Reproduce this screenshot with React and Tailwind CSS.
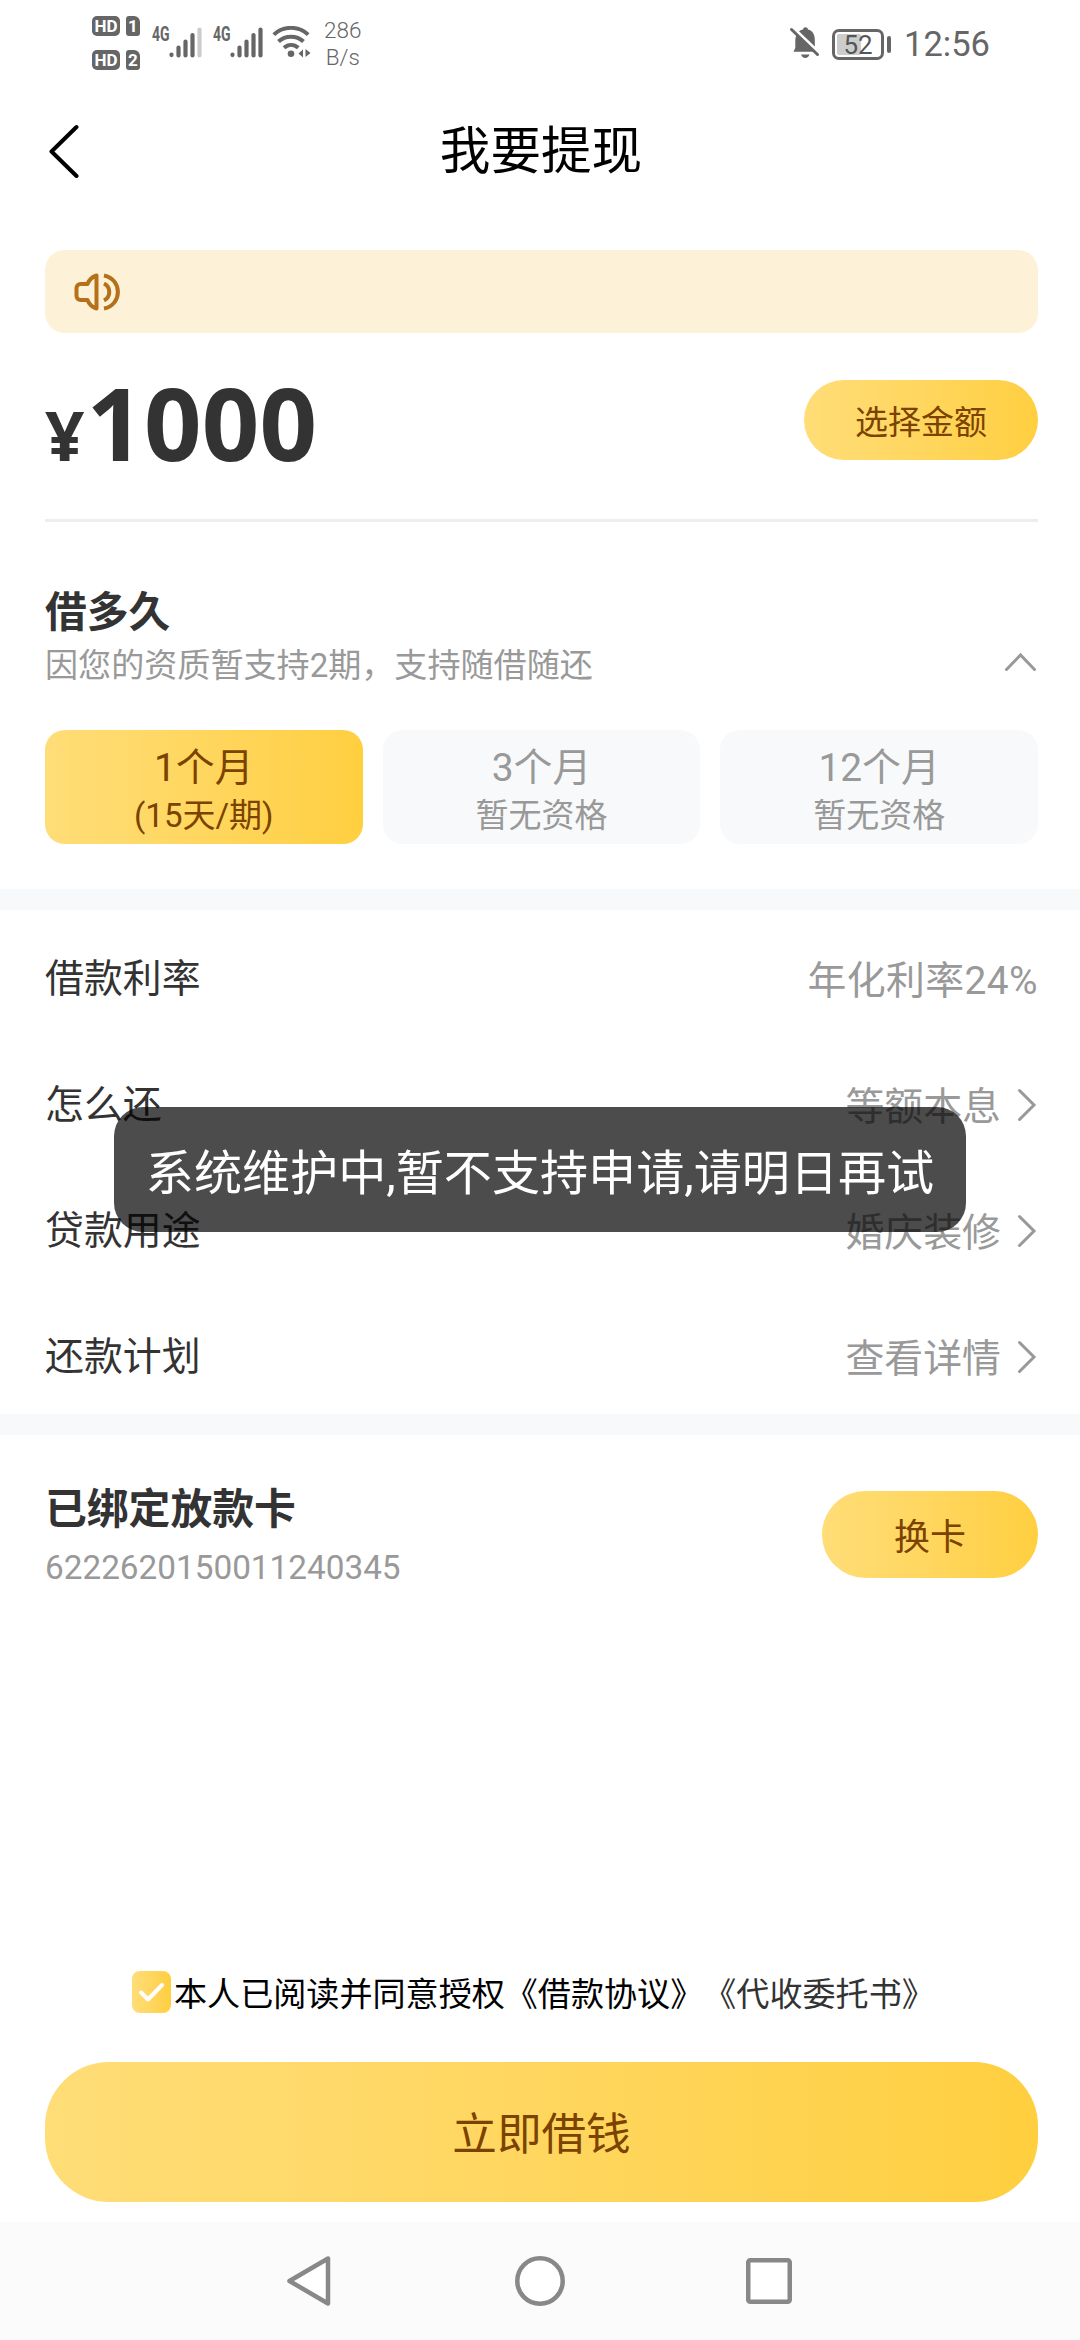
import React, { useState } from 'react';

const rows = [
    { label: '借款利率', value: '年化利率24%', link: false },
    { label: '怎么还', value: '等额本息', link: true },
    { label: '贷款用途', value: '婚庆装修', link: true },
    { label: '还款计划', value: '查看详情', link: true },
];

const terms = [
    { title: '1个月', note: '(15天/期)' },
    { title: '3个月', note: '暂无资格' },
    { title: '12个月', note: '暂无资格' },
];

const SimBadge = ({ index }) => (
    <div className="flex gap-1.5 h-5">
        <span className="w-7 rounded-[5px] bg-[#666] text-white text-[17px] leading-5 font-bold text-center">HD</span>
        <span className="w-3.5 rounded-[3px] rounded-tr-[6px] bg-[#666] text-white text-[17px] leading-5 font-bold text-center">{index}</span>
    </div>
);

const Signal = ({ weak }) => (
    <div className="flex items-start h-[31px]">
        <span className="w-[17px] text-[20px] leading-[14px] font-bold text-[#666] origin-left scale-x-[0.7]">4G</span>
        <svg width="34" height="31" viewBox="0 0 34 31" fill="none" stroke="#666" strokeWidth="4.2" strokeLinecap="round">
            <path d="M2.5 27.5v.6M9.5 20.5v8M16.5 14.5v14M23.5 8v20.5" />
            <path d="M30.5 2.5v26" stroke={weak ? '#ccc' : '#666'} />
        </svg>
    </div>
);

const StatusBar = () => (
    <div className="flex items-start h-20 pl-[92px] pr-[92px] text-[#666]">
        <div className="flex flex-col gap-3.5 pt-4">
            <SimBadge index={1} />
            <SimBadge index={2} />
        </div>
        <div className="flex pt-[27px] pl-3 gap-[10px]">
            <Signal weak />
            <Signal />
        </div>
        <svg className="mt-[26px] ml-[8px]" width="40" height="33" viewBox="0 0 40 33" fill="none" stroke="#666" strokeWidth="4">
            <path d="M1.8 8.6C11.5-.4 26.500-.4 36.200 8.6" />
            <path d="M6.500 15.500c7-6.500 18-6.500 25 0" />
            <path d="M12 21.800c4.300-3.800 10-3.800 14.300 0" />
            <circle cx="19" cy="27.800" r="3.300" fill="#666" stroke="none" />
            <path d="M31 23.500v8l-4.500-4zM33.500 23v8l5-4z" fill="#666" stroke="none" />
        </svg>
        <div className="flex flex-col ml-[12px] pt-[17px] text-[22.5px] leading-[27px] text-center font-light">
            <span>286</span>
            <span>B/s</span>
        </div>
        <div className="flex ml-auto pt-[26px]">
            <svg width="32" height="33" viewBox="0 0 32 33" fill="#666">
                <path d="M4.500 25.800h22.500l-19-17.800c-1.200 2-1.700 4.200-1.700 7v6.800zM10 5.300c1.400-1 2.800-1.600 4-1.800.3-1.400 1.200-2.200 2.500-2.200s2.300.8 2.500 2.200c4.500 1 6.800 5 6.800 10v7z" />
                <path d="M12 28.500h8.500c-.7 2.300-2.200 3.500-4.200 3.500s-3.600-1.200-4.300-3.500z" />
                <path d="M2.500 3.500l26 25" stroke="#666" strokeWidth="3" strokeLinecap="round" />
            </svg>
            <div className="flex items-center ml-[11px] mt-px">
                <div className="relative w-[52px] h-[31px] rounded-[7px] border-3 border-[#666] p-[2px]">
                    <div className="w-6 h-full bg-[#ccc] rounded-[2px]" />
                    <span className="absolute inset-0 text-[26px] leading-[26px] text-center text-[#555]">52</span>
                </div>
                <div className="w-1 h-[17px] ml-[3px] rounded-sm bg-[#666]" />
            </div>
            <span className="ml-[13px] text-[34.5px] leading-[36px] w-[88px] -mr-1">12:56</span>
        </div>
    </div>
);

const App = () => {
    const [term, setTerm] = useState(0);
    const [agreed, setAgreed] = useState(true);

    return (
        <div className="relative flex flex-col w-[1080px] h-[2340px] bg-white overflow-hidden font-[Roboto,'Noto_Sans_CJK_SC',sans-serif] text-[#333]">
            <StatusBar />

            {/* Header */}
            <header className="flex items-center h-[140px] px-[45px]">
                <svg width="38" height="56" viewBox="0 0 38 56" fill="none" stroke="#000" strokeWidth="4" strokeLinecap="round" strokeLinejoin="round">
                    <path d="M31.500 5L6.500 29.500L31.500 54" />
                </svg>
                <h1 className="flex-1 pr-[36px] pt-1 text-center text-[50.6px] leading-[60px] font-normal text-black">我要提现</h1>
            </header>

            {/* Notice */}
            <div className="flex items-center h-[83px] mt-[30px] mx-[45px] shrink-0 w-[993px] px-[29px] rounded-[20px] bg-[#fdf2d7]">
                <svg width="48" height="40" viewBox="0 0 48 40" fill="none" stroke="#b5701a" strokeWidth="4" strokeLinejoin="round">
                    <path d="M22.500 3.500v33c-4.500-1.500-7.500-4.500-9-8.500h-7a4 4 0 0 1-4-4v-8a4 4 0 0 1 4-4h7c1.500-4 4.500-7 9-8.500z" />
                    <path d="M30 11.500c7 3.500 7 13.500 0 17" />
                    <path d="M30 3.500c18.500 3.500 18.500 29.500 0 33" />
                </svg>
            </div>

            {/* Amount */}
            <div className="flex items-start justify-between h-[189px] mx-[45px] w-[993px] pt-[47px] border-b-3 border-[#eee]">
                <div className="mt-0.5 font-['Noto_Sans','Noto_Sans_CJK_SC',sans-serif] font-bold text-[100.8px] leading-[80px]">
                    <span className="mr-0.5 text-[69px] leading-none">¥</span>1000
                </div>
                <button className="w-[234px] h-20 rounded-full bg-linear-to-r from-[#ffdd77] to-[#ffcf3f] font-['Noto_Sans_CJK_SC',sans-serif] text-[33px] leading-none text-[#7c4300]">选择金额</button>
            </div>

            {/* Term */}
            <section className="h-[367px] px-[45px] w-[1083px] pt-[66px]">
                <h2 className="text-[41.8px] leading-[50px] font-bold">借多久</h2>
                <div className="flex justify-between mt-[5px]">
                    <p className="text-[33.1px] leading-[46px] text-[#999]">因您的资质暂支持2期，支持随借随还</p>
                    <svg className="mt-2" width="36" height="22" viewBox="0 0 36 22" fill="none" stroke="#999" strokeWidth="3" strokeLinecap="round">
                        <path d="M4.500 18.500L18.500 4L32.500 18.500" />
                    </svg>
                </div>
                <div className="grid grid-cols-3 gap-5 mt-[41px]">
                    {terms.map((t, i) => (
                        <button
                            key={t.title}
                            onClick={() => setTerm(i)}
                            className={`flex flex-col items-center h-[114px] pt-[13px] rounded-[20px] ${i === term ? 'bg-linear-to-r from-[#ffdd77] to-[#ffcf3f] text-[#7c4300]' : 'bg-[#f8f9fb] text-[#999]'}`}
                        >
                            <span className="text-[38.9px] leading-[50px]">{t.title}</span>
                            <span className="text-[33px] leading-[46px]">{t.note}</span>
                        </button>
                    ))}
                </div>
            </section>

            <div className="h-[21px] bg-[#f8f9fb]" />

            {/* Loan details */}
            <section className="px-[45px] w-[1083px]">
                {rows.map((row) => (
                    <div key={row.label} className="flex items-center justify-between h-[126px] pt-3 text-[38.9px] leading-[50px]">
                        <span>{row.label}</span>
                        <span className="flex items-center text-[#999]">
                            <span className={row.link ? 'pt-1' : 'pt-1 tracking-[0.4px]'}>{row.value}</span>
                            {row.link && (
                                <svg className="ml-4" width="21" height="36" viewBox="0 0 21 36" fill="none" stroke="#999" strokeWidth="3" strokeLinecap="round">
                                    <path d="M2.500 3.500L17 18L2.500 32.500" />
                                </svg>
                            )}
                        </span>
                    </div>
                ))}
            </section>

            <div className="h-[21px] bg-[#f8f9fb]" />

            {/* Bank card */}
            <section className="flex justify-between h-[536px] px-[45px] w-[1083px] pt-[50px]">
                <div>
                    <h2 className="text-[41.8px] leading-[50px] font-bold">已绑定放款卡</h2>
                    <p className="mt-[13px] text-[33.3px] leading-10 text-[#999]">6222620150011240345</p>
                </div>
                <button className="w-[216px] h-[87px] mt-1.5 pb-0.5 rounded-full bg-linear-to-r from-[#ffdd77] to-[#ffcf3f] font-['Noto_Sans_CJK_SC',sans-serif] text-[36px] leading-none text-[#7c4300]">换卡</button>
            </section>

            {/* Agreement */}
            <div className="flex items-center h-[42px] pl-[132px] font-['Noto_Sans_CJK_SC',sans-serif] text-[33.1px] leading-[42px] text-black whitespace-nowrap [text-spacing-trim:space-all]">
                <button onClick={() => setAgreed(!agreed)} className="flex items-center justify-center w-[39px] h-[42px] mr-[3px] rounded-[8px] bg-linear-to-r from-[#ffdd77] to-[#ffcf3f]">
                    {agreed && (
                        <svg width="27" height="22" viewBox="0 0 27 22" fill="none" stroke="#fff" strokeWidth="4" strokeLinecap="round" strokeLinejoin="round">
                            <path d="M3 11.500L10 18.500L24 4" />
                        </svg>
                    )}
                </button>
                <span>本人已阅读并同意授权《借款协议》</span>
                <span className="text-[#333]">《代收委托书》</span>
            </div>

            <button className="h-[140px] w-[993px] mt-[49px] ml-[45px] pb-0.5 shrink-0 rounded-[64px] bg-linear-to-r from-[#ffdd77] to-[#ffcf3f] font-['Noto_Sans_CJK_SC',sans-serif] text-[44.6px] leading-none text-[#7c4300]">立即借钱</button>

            {/* System navigation */}
            <nav className="flex items-center h-[118px] mt-auto pl-[285px] bg-[#fbfbfb]">
                <svg width="48" height="54" viewBox="0 0 48 54" fill="#fff" stroke="#888" strokeWidth="4.500" strokeLinejoin="round">
                    <path d="M43 4.500v45L4.500 27z" />
                </svg>
                <svg className="ml-[180px]" width="54" height="54" viewBox="0 0 54 54" fill="#fff" stroke="#888" strokeWidth="4.500">
                    <circle cx="27" cy="27" r="22.700" />
                </svg>
                <svg className="ml-[178px]" width="48" height="54" viewBox="0 0 48 54" fill="#fff" stroke="#888" strokeWidth="4.500">
                    <rect x="3.250" y="6.250" width="41.500" height="41.500" rx="2" />
                </svg>
            </nav>

            {/* Toast */}
            <div className="absolute top-[1107px] left-[114px] w-[852px] h-[125px] pt-[10px] flex items-center justify-center rounded-[29px] bg-black/70 text-[48.1px] leading-none text-white whitespace-nowrap">
                系统维护中,暂不支持申请,请明日再试
            </div>
        </div>
    );
};

export default App;
